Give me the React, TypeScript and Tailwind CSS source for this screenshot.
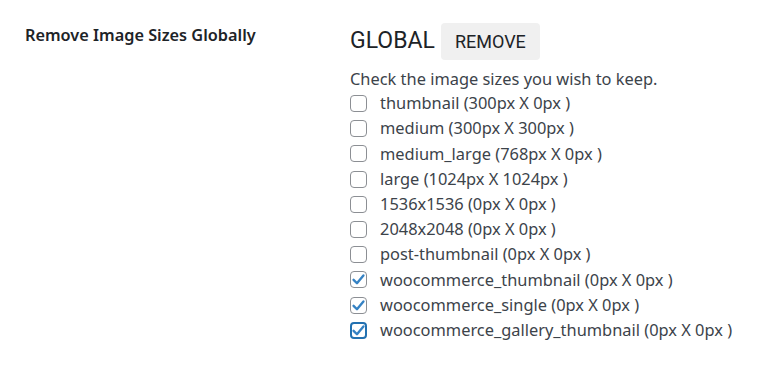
const sizes = [
  { name: "thumbnail", dims: "(300px X 0px )", checked: false },
  { name: "medium", dims: "(300px X 300px )", checked: false },
  { name: "medium_large", dims: "(768px X 0px )", checked: false },
  { name: "large", dims: "(1024px X 1024px )", checked: false },
  { name: "1536x1536", dims: "(0px X 0px )", checked: false },
  { name: "2048x2048", dims: "(0px X 0px )", checked: false },
  { name: "post-thumbnail", dims: "(0px X 0px )", checked: false },
  { name: "woocommerce_thumbnail", dims: "(0px X 0px )", checked: true },
  { name: "woocommerce_single", dims: "(0px X 0px )", checked: true },
  { name: "woocommerce_gallery_thumbnail", dims: "(0px X 0px )", checked: true, focus: true },
];

function Box({ checked, focus }: { checked: boolean; focus?: boolean }) {
  return (
    <span
      className={
        "flex items-center justify-center w-[17px] h-[17px] rounded-[4px] bg-white shrink-0 overflow-visible " +
        (focus ? "border-2 border-[#2271b1]" : "border border-[#8c8f94]")
      }
    >
      {checked && (
        <svg viewBox="0 0 20 20" className="w-[17px] h-[17px] shrink-0">
          <path d="M4.2 10.4 L8.2 14.4 L15.8 5.2" fill="none" stroke="#3582c4" strokeWidth="2.8" strokeLinecap="round" strokeLinejoin="round" />
        </svg>
      )}
    </span>
  );
}

export default function App() {
  return (
    <main className="bg-white w-[778px] h-[376px] text-[#3c434a]" style={{ fontFamily: '"Noto Sans", sans-serif' }}>
      <div className="flex pt-[25px]">
        {/* label column */}
        <div className="w-[350px] pl-[25px] text-[16.3px] font-semibold text-[#1d2327] leading-5">
          Remove Image Sizes Globally
        </div>

        {/* settings column */}
        <div className="flex flex-col">
          <div className="flex items-center gap-[6px] -mt-[2px]" style={{ fontFamily: "Roboto, sans-serif" }}>
            <span className="text-[23px] text-[#1d2327]">GLOBAL</span>
            <span className="bg-[#f0f0f0] rounded-[4px] h-[37px] w-[99px] flex items-center justify-center text-[18px] text-[#1d2327]">
              REMOVE
            </span>
          </div>

          <p className="mt-[6px] text-[16.4px] leading-[25px]">Check the image sizes you wish to keep.</p>

          <div className="flex flex-col">
            {sizes.map((s) => (
              <label key={s.name} className="flex items-center h-[25.2px] text-[16.4px]">
                <span className="mr-[13px]">
                  <Box checked={s.checked} focus={s.focus} />
                </span>
                {s.name} {s.dims}
              </label>
            ))}
          </div>
        </div>
      </div>
    </main>
  );
}
